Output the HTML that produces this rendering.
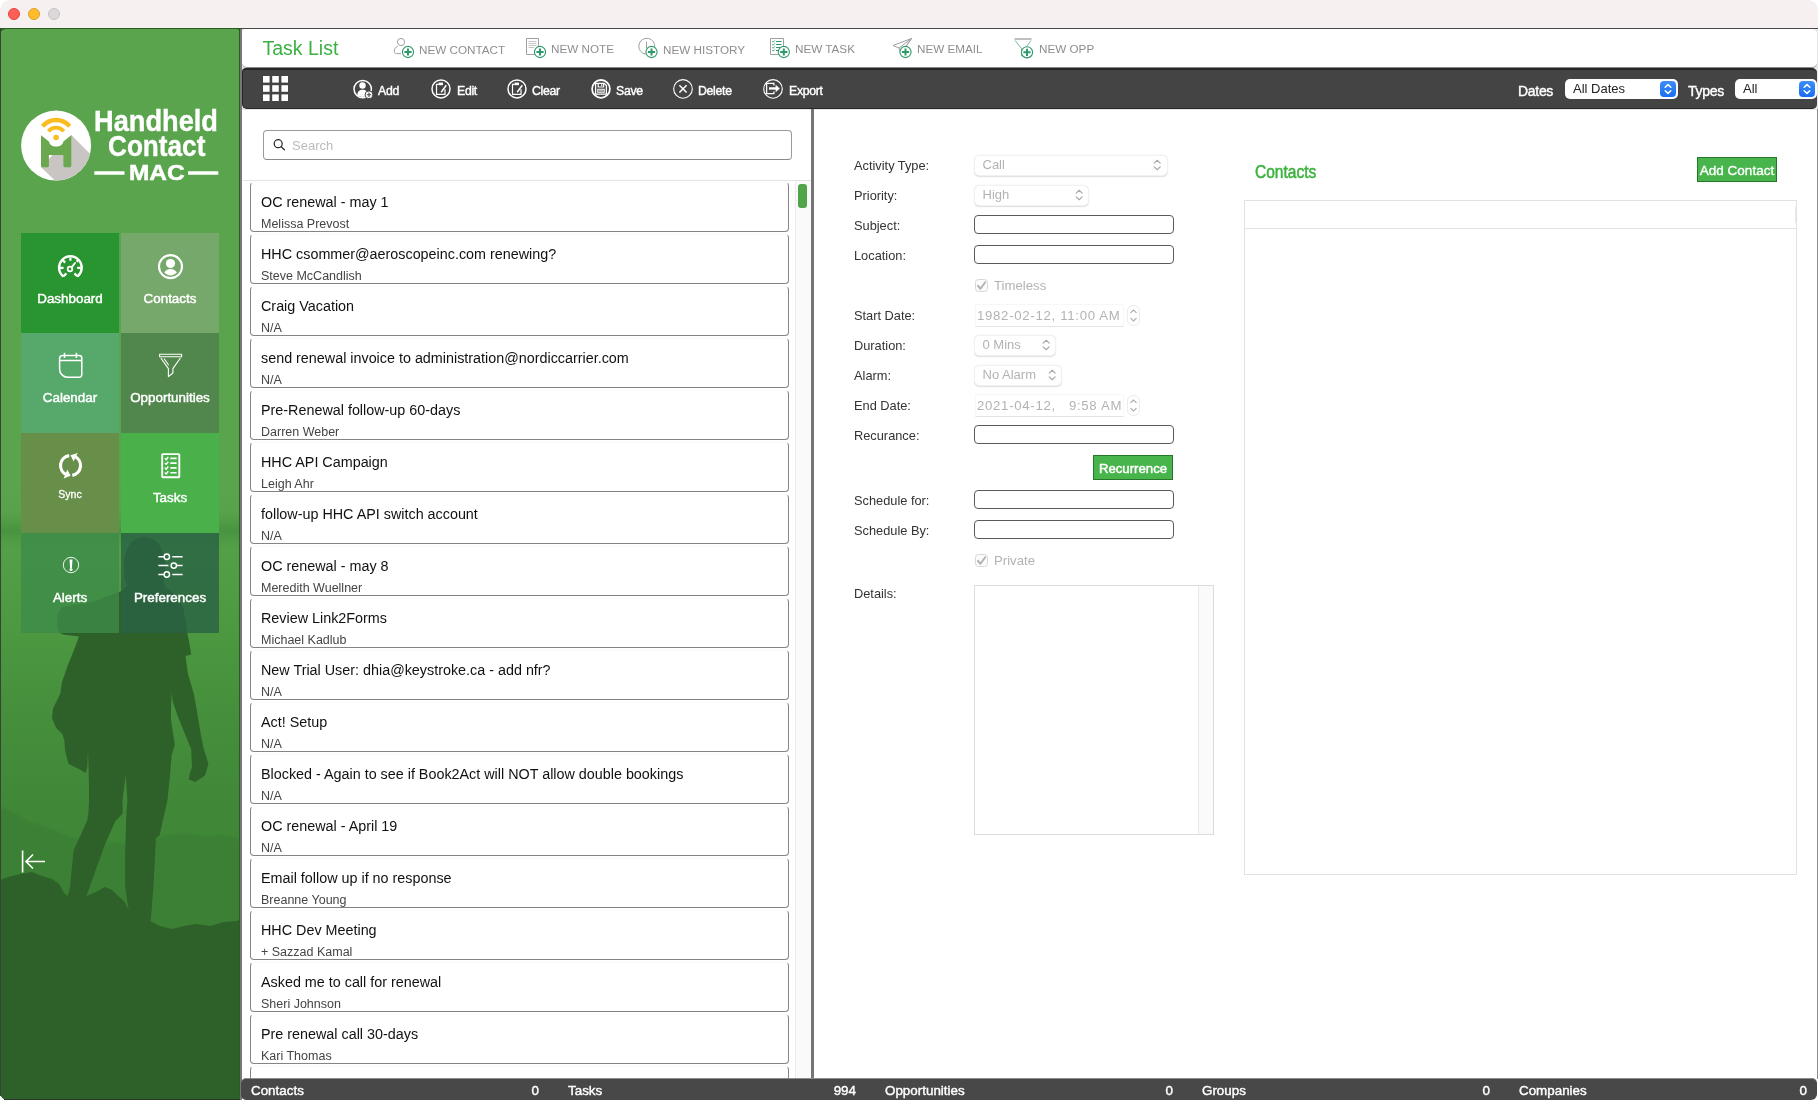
<!DOCTYPE html>
<html lang="en">
<head>
<meta charset="utf-8">
<title>Task List</title>
<style>
*{box-sizing:border-box;margin:0;padding:0}
html,body{width:1818px;height:1100px;overflow:hidden;background:#fff}
body{position:relative;will-change:transform;font-family:"Liberation Sans",sans-serif;color:#111;-webkit-font-smoothing:antialiased}
.a{position:absolute}
.t{position:absolute;white-space:nowrap;line-height:1}
#titlebar{left:0;top:0;width:1818px;height:28px;background:#f6f0f1;border-radius:10px 10px 0 0}
#titleline{left:0;top:28px;width:1818px;height:1px;background:#4a4a4a}
.dot{position:absolute;top:8px;width:12px;height:12px;border-radius:50%}
#sidebar{left:0;top:29px;width:240px;height:1071px;background:linear-gradient(#59a44c 0,#59a44c 460px,#4c9941 600px,#468f3c 680px,#408838 780px,#408838 1071px);overflow:hidden;border-radius:6px 4px 0 8px}
.tile{position:absolute;width:98px;height:100px}
.tile .lb{position:absolute;left:0;width:98px;text-align:center;color:#fff;font-weight:normal;-webkit-text-stroke:.45px #fff;font-size:13.4px;line-height:1;top:58.7px;white-space:nowrap}
#hdr{left:242px;top:29px;width:1575px;height:39px;background:#fff;border-radius:4px 5px 5px 5px;border-bottom:1px solid #8a8a8a}
#tb{left:242px;top:68px;width:1575px;height:41px;background:#444;border-radius:4px 5px 5px 5px;border-top:2px solid #262626;border-left:1px solid #262626;border-bottom:1px solid #262626}
#sb{left:241px;top:1078px;width:1576px;height:22px;background:#484848;border-radius:5px 5px 6px 5px;border-top:1.5px solid #8c8c8c}
.nb{color:#8e8e8e;font-size:12px}
.tbt{color:#fff;font-size:12.3px;-webkit-text-stroke:.4px #fff;letter-spacing:-.3px}
.sbt{color:#fff;font-size:13.4px;-webkit-text-stroke:.4px #fff;top:1084px}
.card{position:absolute;left:250px;width:539px;height:50px;border:1px solid #848484;border-top-color:#fafafa;border-radius:4px;background:#fff}
.card b{position:absolute;left:10px;top:12px;font-weight:normal;font-size:14.35px;line-height:1;white-space:nowrap;color:#111}
.card i{position:absolute;left:10px;top:35px;font-style:normal;font-size:12.5px;line-height:1;white-space:nowrap;color:#444}
.lab{position:absolute;left:854px;font-size:12.8px;line-height:1;color:#333;white-space:nowrap}
.inp{position:absolute;left:974px;width:200px;height:19px;border:1px solid #5a5a5a;border-radius:4px;background:#fff}
.sel{position:absolute;left:973.5px;height:21px;margin-top:-.5px;border:1px solid #f1f1f1;border-radius:5.5px;background:#fff;box-shadow:0 .6px 1.2px rgba(0,0,0,.13);font-size:13px;color:#b3b3b3;line-height:18px;padding-left:8px;white-space:nowrap}
.dis{color:#b3b3b3;font-size:13.2px}
.gbtn{position:absolute;background:#47b54b;border:1px solid #27752b;color:#fff;font-size:13px;text-align:center;white-space:nowrap}
</style>
</head>
<body>
<div id="titlebar" class="a"></div>
<div id="titleline" class="a"></div>
<div class="dot" style="left:8px;background:#fe5f58;border:.5px solid #e2463f"></div>
<div class="dot" style="left:28px;background:#febc2e;border:.5px solid #e0a028"></div>
<div class="dot" style="left:48px;background:#dcd8d9;border:.5px solid #c8c4c5"></div>

<!-- SIDEBAR -->
<div class="a" style="left:0;top:28px;width:241px;height:10px;background:#2c5c26"></div>
<div id="sidebar" class="a">

<svg class="a" style="left:0;top:-29px" width="240" height="1100" viewBox="0 0 240 1100">
 <defs>
  <filter id="bl" x="-5%" y="-5%" width="110%" height="110%"><feGaussianBlur stdDeviation="0.7"/></filter>
  <filter id="bl2" x="-5%" y="-5%" width="110%" height="110%"><feGaussianBlur stdDeviation="1.5"/></filter>
  <linearGradient id="gmist" x1="0" y1="0" x2="0" y2="1"><stop offset="0" stop-color="#4a923f" stop-opacity="0"/><stop offset=".5" stop-color="#3f8a3a" stop-opacity=".6"/><stop offset="1" stop-color="#4a923f" stop-opacity="0"/></linearGradient>
 </defs>
 <rect x="0" y="512" width="240" height="38" fill="url(#gmist)"/>
 <!-- mid mountains -->
 <path filter="url(#bl2)" d="M0 806L15 813L30 822L49 828L74 838L100 842L130 844L157 838L172 834L187 833L205 836L221 835L240 838V960H0Z" fill="#3b8035"/>
 <!-- ground -->
 <path filter="url(#bl)" d="M0 880L8 877L20 874L32 872L42 876L52 879L59 884L64 893L72 900L84 897L96 892L105 887L112 890L118 896L124 901L130 912L140 920L152 922L160 926L172 929L184 926L196 924L210 926L224 922L236 921L240 920V1100H0Z" fill="#2e6129"/>
 <rect x="0" y="960" width="240" height="140" fill="#2e6129"/>
 <!-- hiker -->
 <g filter="url(#bl)" fill="#2f6029">
  <path d="M143.600 537.300C153 537 160 543 161.800 551C164 558 166 564 165.500 569C165.500 575 164 579 163.600 581.800L165.500 587.300L171 591C177 596 181 602 183.600 609L187.300 632.700L189.600 644.500L191.200 654.400L185.500 656L188 674L193.700 693.600L197 711.600L200.200 731.300L203.500 747.700L208.400 764L205 775.500L195.300 782L188.800 779.600L189.600 773.800L192 767.300L191.200 749.300L183.800 731.300L177.300 715L172.400 700.200L171.600 692L170.800 718.200L173.200 734.600L174.800 744.400L171.600 755.800L170 775.500L167.500 800L159.500 835.700L155.900 838L153.400 887.300L149.700 934L171.800 948.600L178 956L170 960L137.500 961L127.600 936.400L128.900 911.800L125.200 887.300L125.200 850.500L126.400 813.600L127.400 800L125.700 775.500L122.500 800L122.700 813.600L115.400 821L105.500 843L93 877.500L86 897L97 926.500L95.700 931.500L84 931L61.400 916.700L63.800 912L70 887L73.600 850.500L87 821L88.400 813.600L89 800L89 783.700L88 751L87.300 767.300L85.600 773L79 769L68.500 764L65.200 751L64.400 741L62.700 734.600L56.200 728L52 718.200L53 708.400L60.300 693.600L62 682.200L67.600 665.800L74.200 649.500L79 636.400L64.400 634.700L59 632.700L57.300 627.300L57.300 614.500L61.800 607.300L92.700 601.800L121.800 591L127.300 585.500C124.500 580 124 576 124.500 572.700C123.500 566 124 560 125.500 554.500C128 544 134 537.500 143.600 537.300Z"/>
 </g>
 <!-- collapse icon -->
 <g stroke="#fff" stroke-width="1.6" fill="none" stroke-linecap="butt">
  <path d="M22.600 850.500V872.500M25.800 861.500H45M33 854.500L26 861.500L33 868.500"/>
 </g>
 <!-- logo -->
 <g>
  <clipPath id="lc"><circle cx="56.100" cy="145.600" r="35"/></clipPath>
  <circle cx="56.100" cy="145.600" r="35" fill="#fff"/>
  <g clip-path="url(#lc)">
   <path d="M71.300 135L120 184L90 214L41 167.200Z" fill="#c9c5c2"/>
   <path d="M41 135.200L48.900 141.500C49.500 144.500 52 146.600 56.100 146.600C60.200 146.600 62.800 144.500 63.400 141.500L71.300 135.200V165.700C71.300 166.600 70.700 167.200 69.800 167.200H64.900C64 167.200 63.400 166.600 63.400 165.700V155H48.900V165.700C48.900 166.600 48.300 167.200 47.400 167.200H42.500C41.600 167.200 41 166.600 41 165.700Z" fill="#6aa84f"/>
  </g>
  <circle cx="56.100" cy="137.500" r="2.800" fill="#fbbc1f"/>
  <path d="M48.400 131.200A10 10 0 0 1 63.800 131.200" fill="none" stroke="#fbbc1f" stroke-width="3.800"/>
  <path d="M42.600 126.300A17.600 17.600 0 0 1 69.600 126.300" fill="none" stroke="#fbbc1f" stroke-width="4.400"/>
  <path d="M94.300 173H124.500M188 173H218.300" stroke="#fff" stroke-width="3.400"/>
 </g>
</svg>
<div class="a" style="left:0;top:-29px;width:240px;height:0">
<div class="t" id="lg1" style="-webkit-text-stroke:.4px #fff;left:94.3px;top:106px;font-size:29.4px;font-weight:bold;color:#fff;transform-origin:0 0;transform:scaleX(.926)">Handheld</div>
<div class="t" id="lg2" style="-webkit-text-stroke:.4px #fff;left:107.6px;top:131.4px;font-size:29.4px;font-weight:bold;color:#fff;transform-origin:0 0;transform:scaleX(.89)">Contact</div>
<div class="t" id="lg3" style="left:129.3px;top:161.8px;font-size:22.1px;font-weight:bold;color:#fff;-webkit-text-stroke:.5px #fff;transform-origin:0 0;transform:scaleX(1.107)">MAC</div>
</div>

<div class="tile" style="left:21px;top:204px;background:#289530"><div class="lb">Dashboard</div></div>
<div class="tile" style="left:121px;top:204px;background:#76a76b"><div class="lb">Contacts</div></div>
<div class="tile" style="left:21px;top:304px;background:#56a86b"><div class="lb" style="top:58.2px">Calendar</div></div>
<div class="tile" style="left:121px;top:304px;background:#51874d"><div class="lb" style="top:58.2px">Opportunities</div></div>
<div class="tile" style="left:21px;top:404px;background:#688f49"><div class="lb" style="font-size:10.500px;top:56px;-webkit-text-stroke:.3px #fff">Sync</div></div>
<div class="tile" style="left:121px;top:404px;background:#4ab14a"><div class="lb" style="top:58.2px">Tasks</div></div>
<div class="tile" style="left:21px;top:504px;background:rgba(61,139,73,.8)"><div class="lb" style="top:58.2px">Alerts</div></div>
<div class="tile" style="left:121px;top:504px;background:rgba(41,98,68,.8)"><div class="lb" style="top:58.2px">Preferences</div></div>
<svg class="a" style="left:0;top:-29px" width="240" height="700" viewBox="0 0 240 700" fill="none" stroke="#fff">
 <!-- dashboard -->
 <g stroke-width="2.400" stroke-linecap="butt">
  <path d="M62.840 276A11.300 11.300 0 1 1 77.960 276" stroke-linecap="round"/>
  <path d="M70.400 257.500V260.800M60 267.800H63.600M77.200 267.800H80.800M62.600 260L65.200 262.600M78.200 260L76.600 261.600M63.600 276.200L66.400 273.400M77.200 276.200L74.400 273.400" stroke-width="2.200"/>
  <circle cx="70" cy="269" r="2.300" stroke-width="1.800"/>
  <path d="M71.600 267.300L75 263" stroke-width="2" stroke-linecap="round"/>
 </g>
 <!-- contacts -->
 <circle cx="170.500" cy="266.600" r="11.500" stroke-width="2.100"/>
 <circle cx="170.500" cy="263.500" r="4.600" fill="#fff" stroke="none"/>
 <path d="M164.200 272.300C165.800 270.200 168 269 170.500 269C173 269 175.200 270.200 177 272.300C175.300 274.300 173 275.500 170.500 275.500C168 275.500 165.800 274.300 164.200 272.300Z" fill="#fff" stroke="none"/>
 <!-- calendar -->
 <g stroke-width="1.500">
  <path d="M62.600 355.500H79.200A2.600 2.600 0 0 1 81.800 358.100V374.600A2.600 2.600 0 0 1 79.200 377.200H67.600A8 8 0 0 1 59.600 369.200V358.500A3 3 0 0 1 62.600 355.500Z"/>
  <path d="M59.600 360.500H81.800M64.500 352.800V358M76.400 352.800V358"/>
 </g>
 <!-- funnel -->
 <g stroke-width="1.100" stroke-linejoin="round">
  <path d="M159.600 354.200H181.600V356.800H159.600Z"/>
  <path d="M160.800 358L168.400 368.600V376.600L172.900 373V368.600L180.400 358"/>
  <path d="M164 358.500L168.700 365.200"/>
 </g>
 <!-- sync -->
 <g stroke-width="3.200">
  <path d="M69.200 455.550A10.050 10.050 0 0 0 66.300 474.600"/>
  <path d="M72.300 475.400A10.050 10.050 0 0 0 74.700 456.400"/>
 </g>
 <path d="M70.600 475.700L67.300 469.400L63.600 478.400Z M70.500 455.300L77.700 452.900L73.600 461.500Z" fill="#fff" stroke="none"/>
 <!-- tasks -->
 <g stroke-width="1.500">
  <rect x="162.200" y="454.100" width="17.100" height="23.100" rx=".6" stroke-width="1.900"/>
  <path d="M170.300 458.400H176.600M170.300 463.100H176.600M170.300 467.900H176.600M170.300 472.700H176.600" stroke-width="1.600"/>
  <path d="M164.800 458.200L166.200 459.600L168.300 457M164.800 462.900L166.200 464.300L168.300 461.700M164.800 467.700L166.200 469.100L168.300 466.500M164.800 472.500L166.200 473.900L168.300 471.300" stroke-width="1.400"/>
 </g>
 <!-- alerts -->
 <circle cx="71" cy="565" r="7.700" stroke-width=".9"/>
 <path d="M69.500 559.400H72.500L71.900 567.900H70.100Z" fill="#fff" stroke="none"/>
 <circle cx="71" cy="569.600" r="1.500" fill="#fff" stroke="none"/>
 <!-- preferences -->
 <g stroke-width="1.500">
  <path d="M158.300 556.700H163.800M172.300 556.700H182.600M158.300 565.600H168.400M177 565.600H182.600M158.300 574.500H163.800M172.300 574.500H182.600"/>
  <circle cx="166.800" cy="556.700" r="2.700"/><circle cx="173.800" cy="565.600" r="2.700"/><circle cx="166.800" cy="574.500" r="2.700"/>
 </g>
</svg>

</div>
<div class="a" style="left:239px;top:29px;width:1px;height:1071px;background:#2c5c26"></div><div class="a" style="left:240px;top:29px;width:2px;height:1071px;background:#787878"></div>
<div class="a" style="left:0;top:29px;width:1px;height:1067px;background:#38442f"></div>
<div class="a" style="left:4px;top:1099px;width:236px;height:1px;background:#2a3626"></div>

<!-- HEADER -->
<div class="a" style="left:242px;top:29px;width:1576px;height:81px;background:#e9e6e6"></div>
<div id="hdr" class="a"></div>
<div id="tb" class="a"></div>

<div class="t" style="left:262.5px;top:39px;font-size:19.5px;color:#3cb043">Task List</div>
<svg class="a" style="left:390px;top:34px" width="720" height="30" viewBox="390 34 720 30" fill="none">
 <defs>
  <g id="plus"><circle r="5.6" fill="#fff" stroke="#2f9a69" stroke-width="1.1"/><path d="M-3.6 0H3.6M0 -3.6V3.6" stroke="#2f9a69" stroke-width="2"/></g>
 </defs>
 <!-- new contact -->
 <g stroke="#a0a0a0" stroke-width="1">
  <circle cx="401" cy="42" r="3.6"/>
  <path d="M397.8 46.3C395.4 47.2 394.3 49.2 394.3 51.5C394.3 53 395.2 53.6 396.6 53.6H401"/>
 </g>
 <use href="#plus" x="408" y="52"/>
 <!-- new note -->
 <g stroke="#a0a0a0" stroke-width="1">
  <path d="M526.5 38.5H538.5V54.5H526.5Z"/>
  <path d="M528.5 41.5H536.5M528.5 43.5H536.5M528.5 45.5H536.5M528.5 47.5H534" stroke="#c4c4c4"/>
 </g>
 <use href="#plus" x="540" y="52"/>
 <!-- new history -->
 <g stroke="#a0a0a0" stroke-width="1">
  <path d="M646 54.2A8 8 0 1 1 654.6 48"/>
  <path d="M646.5 41.5V48.5"/>
 </g>
 <use href="#plus" x="651.5" y="52"/>
 <!-- new task -->
 <g stroke="#a0a0a0" stroke-width="1">
  <path d="M770.5 38.5H783.5V54.5H770.5Z"/>
  <path d="M776 41.5H781.5M776 44.5H781.5M776 47.5H781.5M776 50.5H779" stroke="#2f9a69"/>
  <path d="M772.3 41.3l.9 .9l1.5 -1.8M772.3 44.3l.9 .9l1.5 -1.8M772.3 47.3l.9 .9l1.5 -1.8M772.3 50.3l.9 .9l1.5 -1.8" stroke="#2f9a69" stroke-width=".9"/>
 </g>
 <use href="#plus" x="783.8" y="52"/>
 <!-- new email -->
 <g stroke="#a0a0a0" stroke-width="1" stroke-linejoin="round">
  <path d="M911.5 38.5L893 45.5L899 48L901 53.5L903.5 50Z"/>
  <path d="M911.5 38.5L899 48M911.5 38.5L901 53.5"/>
 </g>
 <use href="#plus" x="905.5" y="52"/>
 <!-- new opp -->
 <g stroke="#a0a0a0" stroke-width="1" stroke-linejoin="round">
  <path d="M1014.5 39H1031.5" stroke-width="1.6" stroke="#b0b0b0"/>
  <path d="M1015 40.5L1021.5 48.5V56L1025 53.5V48.5L1031 40.5" stroke="#7fb89e"/>
 </g>
 <use href="#plus" x="1027" y="52.3"/>
</svg>
<div class="t nb" id="nb1" style="left:419px;top:44.0px;font-size:11.7px">NEW CONTACT</div>
<div class="t nb" id="nb2" style="left:551px;top:43.0px;font-size:11.7px">NEW NOTE</div>
<div class="t nb" id="nb3" style="left:663px;top:44.0px;font-size:11.7px">NEW HISTORY</div>
<div class="t nb" id="nb4" style="left:795px;top:43.0px;font-size:11.7px">NEW TASK</div>
<div class="t nb" id="nb5" style="left:917px;top:43.0px;font-size:11.7px">NEW EMAIL</div>
<div class="t nb" id="nb6" style="left:1039px;top:43.0px;font-size:11.7px">NEW OPP</div>

<!-- toolbar -->
<svg class="a" style="left:263px;top:76px" width="25" height="25" viewBox="0 0 25 25" fill="#fff">
 <rect x="0.0" y="0.0" width="6.6" height="6.6"/><rect x="9.2" y="0.0" width="6.6" height="6.6"/><rect x="18.4" y="0.0" width="6.6" height="6.6"/>
 <rect x="0.0" y="9.2" width="6.6" height="6.6"/><rect x="9.2" y="9.2" width="6.6" height="6.6"/><rect x="18.4" y="9.2" width="6.6" height="6.6"/>
 <rect x="0.0" y="18.4" width="6.6" height="6.6"/><rect x="9.2" y="18.4" width="6.6" height="6.6"/><rect x="18.4" y="18.4" width="6.6" height="6.6"/>
</svg>
<svg class="a" style="left:350px;top:76px" width="440" height="28" viewBox="350 76 440 28" fill="none" stroke="#fff" stroke-width="1.5">
 <!-- add -->
 <circle cx="362.700" cy="89.100" r="8.700"/>
 <circle cx="362.500" cy="85.500" r="3.200" fill="#fff" stroke="none"/>
 <path d="M357.300 95.200C357.300 91.600 359.600 89.800 362.600 89.800C365.600 89.800 368 91.600 368 95.200C366.500 96.300 364.600 96.900 362.700 96.900C360.700 96.900 358.800 96.300 357.300 95.200Z" fill="#fff" stroke="none"/>
 <circle cx="369" cy="94.800" r="3.900" fill="#fff" stroke="#444" stroke-width="1"/>
 <path d="M366.800 94.800H371.200M369 92.600V97" stroke="#444" stroke-width="1.100"/>
 <!-- edit -->
 <g id="clipb">
 <circle cx="441" cy="88.900" r="9"/>
 <path d="M438.700 84.300H436.500V94.400H445V89.200" stroke-width="1.200"/>
 <path d="M438.600 82.600H443V85.200H438.600Z" fill="#fff" stroke="none"/>
 <path d="M441.200 92.200L446.300 85.200" stroke-width="1.500"/>
 </g>
 <!-- clear -->
 <use href="#clipb" x="76"/>
 <!-- save -->
 <circle cx="601" cy="88.900" r="8.900" stroke-width="1.800"/>
 <path d="M595.600 83.300H604.200L606.400 85.500V94.200H595.600Z" stroke-width="1.300"/>
 <path d="M598.200 83.300V87H603.600V83.300M601.700 84.300V86" stroke-width="1.200"/>
 <path d="M597.800 89.300H604.200V92.300H597.800Z" stroke-width="1.100"/>
 <path d="M598.800 90.800H603.200" stroke-width="1.200" stroke="#ccc"/>
 <!-- delete -->
 <circle cx="683" cy="88.900" r="9.300" stroke-width="1.100"/>
 <path d="M679.400 85.300L686.600 92.500M686.600 85.300L679.400 92.500" stroke-width="1.500"/>
 <!-- export -->
 <circle cx="773" cy="88.900" r="9.300" stroke-width="1.100"/>
 <path d="M773.900 85.500V83.300H766.600V93.600H773.900V91.400" stroke-width="1.300"/>
 <path d="M769 88.450H776.500" stroke-width="2.400"/>
 <path d="M775.600 84.700L779.800 88.450L775.600 92.200Z" fill="#fff" stroke="none"/>
</svg>
<div class="t tbt" id="tb1" style="left:378px;top:85px">Add</div>
<div class="t tbt" id="tb2" style="left:457px;top:85px">Edit</div>
<div class="t tbt" id="tb3" style="left:532px;top:85px">Clear</div>
<div class="t tbt" id="tb4" style="left:616px;top:85px">Save</div>
<div class="t tbt" id="tb5" style="left:698px;top:85px">Delete</div>
<div class="t tbt" id="tb6" style="left:789px;top:85px">Export</div>
<div class="t tbt" id="tb7" style="left:1518px;top:83.5px;font-size:14px">Dates</div>
<div class="t tbt" id="tb8" style="left:1688px;top:83.5px;font-size:14px">Types</div>
<div class="a" style="left:1565px;top:79px;width:113px;height:20px;background:#fff;border-radius:5px"></div>
<div class="t" style="left:1573px;top:82px;font-size:13px;color:#222">All Dates</div>
<div class="a" style="left:1660px;top:81px;width:16px;height:16px;border-radius:4px;background:linear-gradient(#3d8ef8,#1a6df0)"></div>
<svg class="a" style="left:1660px;top:81px" width="16" height="16" fill="none" stroke="#fff" stroke-width="1.5" stroke-linecap="round" stroke-linejoin="round"><path d="M5.2 6.3L8 3.6L10.8 6.3M5.2 9.7L8 12.4L10.8 9.7"/></svg>
<div class="a" style="left:1735px;top:79px;width:82px;height:20px;background:#fff;border-radius:5px"></div>
<div class="t" style="left:1743px;top:82px;font-size:13px;color:#222">All</div>
<div class="a" style="left:1799px;top:81px;width:16px;height:16px;border-radius:4px;background:linear-gradient(#3d8ef8,#1a6df0)"></div>
<svg class="a" style="left:1799px;top:81px" width="16" height="16" fill="none" stroke="#fff" stroke-width="1.5" stroke-linecap="round" stroke-linejoin="round"><path d="M5.2 6.3L8 3.6L10.8 6.3M5.2 9.7L8 12.4L10.8 9.7"/></svg>


<!-- LIST -->

<div class="a" style="left:263px;top:130px;width:529px;height:30px;border:1px solid #9a9a9a;border-bottom-color:#8a8a8a;border-radius:4px;background:#fff"></div>
<svg class="a" style="left:272px;top:137px" width="16" height="16" fill="none" stroke="#2a2a2a" stroke-width="1.25" stroke-linecap="round"><circle cx="6.2" cy="6.7" r="4"/><path d="M9.2 9.7L12.4 12.8"/></svg>
<div class="t" id="srch" style="left:292px;top:139px;font-size:13px;color:#bcbcbc">Search</div>
<div class="a" style="left:243px;top:180px;width:568px;height:1px;background:#e2e2e2"></div>
<div class="a" style="left:795px;top:181px;width:16px;height:898px;background:#fafafa;border-left:1px solid #ececec"></div>
<div class="a" style="left:798px;top:184px;width:9px;height:24px;border-radius:3px;background:#50a548"></div>
<div class="a" style="left:811px;top:109px;width:3px;height:970px;background:#757575"></div>
<div class="card" style="top:182px"><b>OC renewal - may 1</b><i>Melissa Prevost</i></div>
<div class="card" style="top:234px"><b>HHC csommer@aeroscopeinc.com renewing?</b><i>Steve McCandlish</i></div>
<div class="card" style="top:286px"><b>Craig Vacation</b><i>N/A</i></div>
<div class="card" style="top:338px"><b>send renewal invoice to administration@nordiccarrier.com</b><i>N/A</i></div>
<div class="card" style="top:390px"><b>Pre-Renewal follow-up 60-days</b><i>Darren Weber</i></div>
<div class="card" style="top:442px"><b>HHC API Campaign</b><i>Leigh Ahr</i></div>
<div class="card" style="top:494px"><b>follow-up HHC API switch account</b><i>N/A</i></div>
<div class="card" style="top:546px"><b>OC renewal - may 8</b><i>Meredith Wuellner</i></div>
<div class="card" style="top:598px"><b>Review Link2Forms</b><i>Michael Kadlub</i></div>
<div class="card" style="top:650px"><b>New Trial User: dhia@keystroke.ca - add nfr?</b><i>N/A</i></div>
<div class="card" style="top:702px"><b>Act! Setup</b><i>N/A</i></div>
<div class="card" style="top:754px"><b>Blocked - Again to see if Book2Act will NOT allow double bookings</b><i>N/A</i></div>
<div class="card" style="top:806px"><b>OC renewal - April 19</b><i>N/A</i></div>
<div class="card" style="top:858px"><b>Email follow up if no response</b><i>Breanne Young</i></div>
<div class="card" style="top:910px"><b>HHC Dev Meeting</b><i>+ Sazzad Kamal</i></div>
<div class="card" style="top:962px"><b>Asked me to call for renewal</b><i>Sheri Johnson</i></div>
<div class="card" style="top:1014px"><b>Pre renewal call 30-days</b><i>Kari Thomas</i></div>
<div class="card" style="top:1066px;height:20px;border-bottom:none"></div>


<!-- FORM -->

<div class="lab" style="top:160px">Activity Type:</div>
<div class="lab" style="top:190px">Priority:</div>
<div class="lab" style="top:220px">Subject:</div>
<div class="lab" style="top:250px">Location:</div>
<div class="lab" style="top:310px">Start Date:</div>
<div class="lab" style="top:340px">Duration:</div>
<div class="lab" style="top:370px">Alarm:</div>
<div class="lab" style="top:400px">End Date:</div>
<div class="lab" style="top:430px">Recurance:</div>
<div class="lab" style="top:495px">Schedule for:</div>
<div class="lab" style="top:525px">Schedule By:</div>
<div class="lab" style="top:588px">Details:</div>

<div class="sel" style="top:155px;width:194px">Call</div>
<div class="sel" style="top:185px;width:115px">High</div>
<div class="inp" style="top:215px"></div>
<div class="inp" style="top:245px"></div>
<div class="a" style="left:974.5px;top:278.5px;width:13.5px;height:13.5px;border:1px solid #d8d8d8;border-radius:3.5px;background:#fbfbfb"></div>
<svg class="a" style="left:975px;top:279px" width="13" height="13" fill="none" stroke="#b0b0b0" stroke-width="1.9" stroke-linecap="round" stroke-linejoin="round"><path d="M3 6.8L5.4 9.8L10.2 3.2"/></svg>
<div class="t dis" style="left:994px;top:279px">Timeless</div>
<div class="a" style="left:975px;top:304px;width:149px;height:23px;background:#fff;border-top:1px solid #f7f7f7;border-bottom:1px solid #e4e4e4;border-left:1px solid #f8f8f8;border-right:1px solid #f8f8f8"></div>
<div class="t dis" style="left:977px;top:309px;letter-spacing:.7px">1982-02-12, 11:00 AM</div>
<div class="a" style="left:1127px;top:305px;width:13px;height:21px;border:1px solid #ececec;border-radius:6px;background:#fff"></div>
<svg class="a" style="left:1127px;top:305px" width="13" height="21" fill="none" stroke="#b0b0b0" stroke-width="1.2" stroke-linecap="round" stroke-linejoin="round"><path d="M3.8 7.6L6.5 5L9.2 7.6M3.8 13.4L6.5 16L9.2 13.4"/></svg>
<div class="sel" style="top:335px;width:82px">0 Mins</div>
<div class="sel" style="top:365px;width:88px">No Alarm</div>
<div class="a" style="left:975px;top:394px;width:149px;height:23px;background:#fff;border-top:1px solid #f7f7f7;border-bottom:1px solid #e4e4e4;border-left:1px solid #f8f8f8;border-right:1px solid #f8f8f8"></div>
<div class="t dis" style="left:977px;top:399px;letter-spacing:.7px">2021-04-12, &nbsp;&nbsp;9:58 AM</div>
<div class="a" style="left:1127px;top:395px;width:13px;height:21px;border:1px solid #ececec;border-radius:6px;background:#fff"></div>
<svg class="a" style="left:1127px;top:395px" width="13" height="21" fill="none" stroke="#b0b0b0" stroke-width="1.2" stroke-linecap="round" stroke-linejoin="round"><path d="M3.8 7.6L6.5 5L9.2 7.6M3.8 13.4L6.5 16L9.2 13.4"/></svg>
<div class="inp" style="top:425px"></div>
<div class="gbtn" style="left:1093px;top:455px;width:80px;height:25px;line-height:25px;font-size:13.2px;-webkit-text-stroke:.45px #fff">Recurrence</div>
<div class="inp" style="top:490px"></div>
<div class="inp" style="top:520px"></div>
<div class="a" style="left:974.5px;top:553.5px;width:13.5px;height:13.5px;border:1px solid #d8d8d8;border-radius:3.5px;background:#fbfbfb"></div>
<svg class="a" style="left:975px;top:554px" width="13" height="13" fill="none" stroke="#b0b0b0" stroke-width="1.9" stroke-linecap="round" stroke-linejoin="round"><path d="M3 6.8L5.4 9.8L10.2 3.2"/></svg>
<div class="t dis" style="left:994px;top:554px">Private</div>
<div class="a" style="left:974px;top:585px;width:240px;height:250px;border:1px solid #dcdcdc;background:#fff"></div>
<div class="a" style="left:1198px;top:586px;width:15px;height:248px;border-left:1px solid #e8e8e8;background:#fafafa"></div>
<svg class="a" style="left:0;top:0;pointer-events:none" width="1818" height="1100" fill="none" stroke="#a8a8a8" stroke-width="1.2" stroke-linecap="round" stroke-linejoin="round">
 <path id="chv" d="M1154.2 163.1L1157.2 160.3L1160.2 163.1M1154.2 166.9L1157.2 169.7L1160.2 166.9"/>
 <path d="M1076.2 193.1L1079.2 190.3L1082.2 193.1M1076.2 196.9L1079.2 199.7L1082.2 196.9"/>
 <path d="M1043.2 343.1L1046.2 340.3L1049.2 343.1M1043.2 346.9L1046.2 349.7L1049.2 346.9"/>
 <path d="M1049.2 373.1L1052.2 370.3L1055.2 373.1M1049.2 376.9L1052.2 379.7L1055.2 376.9"/>
</svg>

<div class="t" id="ctitle" style="left:1254.5px;top:162.8px;font-size:18px;color:#3db33f;-webkit-text-stroke:.55px #3db33f;transform-origin:0 0;transform:scaleX(.863)">Contacts</div>
<div class="gbtn" style="left:1697px;top:157px;width:80px;height:25px;line-height:25px;font-size:13.5px;-webkit-text-stroke:.35px #fff">Add Contact</div>
<div class="a" style="left:1244px;top:200px;width:553px;height:675px;border:1px solid #e2e2e2;background:#fff"></div>
<div class="a" style="left:1244px;top:228px;width:553px;height:1px;background:#e2e2e2"></div>
<div class="a" style="left:1795px;top:207px;width:1px;height:16px;background:#e8e8e8"></div>


<div class="a" style="left:1817px;top:109px;width:1px;height:970px;background:#8e8e8e"></div>
<!-- STATUS -->
<div id="sb" class="a"></div>
<div class="t sbt" style="left:251px">Contacts</div><div class="t sbt" style="left:439px;width:100px;text-align:right">0</div>
<div class="t sbt" style="left:568px">Tasks</div><div class="t sbt" style="left:756px;width:100px;text-align:right">994</div>
<div class="t sbt" style="left:885px">Opportunities</div><div class="t sbt" style="left:1073px;width:100px;text-align:right">0</div>
<div class="t sbt" style="left:1202px">Groups</div><div class="t sbt" style="left:1390px;width:100px;text-align:right">0</div>
<div class="t sbt" style="left:1519px">Companies</div><div class="t sbt" style="left:1707px;width:100px;text-align:right">0</div>

</body>
</html>
